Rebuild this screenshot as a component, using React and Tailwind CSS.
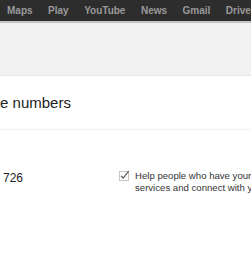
import React from "react";

const navItems = ["Maps", "Play", "YouTube", "News", "Gmail", "Drive"];

function CheckBox() {
  return (
    <svg width="11" height="11" viewBox="0 0 11 11" className="shrink-0">
      <rect x="0.5" y="1.5" width="9" height="9" fill="#fff" stroke="#c6c6c6" />
      <path d="M2 5.8 L4.2 8 L9.8 1" fill="none" stroke="#555" strokeWidth="1.2" />
    </svg>
  );
}

export default function App() {
  return (
    <div className="w-[251px] h-[255px] overflow-hidden bg-white font-['Liberation_Sans',Arial,sans-serif]">
      <div className="h-[21px] bg-[#2d2d2d] flex items-center gap-[15.5px] pl-[7px] whitespace-nowrap">
        {navItems.map((item) => (
          <span key={item} className="text-[10px] font-bold text-[#999] leading-none">
            {item}
          </span>
        ))}
      </div>
      <div className="h-[2px] bg-[#c4c4c4]" />
      <div className="h-[53px] bg-[#f1f1f1] border-b border-[#e5e5e5]" />
      <div className="h-[54px] border-b border-[#f2f2f2] flex items-center whitespace-nowrap">
        <h2 className="ml-[-35px] text-[15px] text-[#222] leading-none">Phone numbers</h2>
      </div>
      <div className="flex pt-[40px] whitespace-nowrap">
        <div className="w-[119px] shrink-0 pl-[3px] text-[12px] text-[#222] leading-none pt-[2px]">726</div>
        <div className="flex gap-[5px] text-[9.6px] text-[#333] leading-[12px]">
          <CheckBox />
          <div>
            Help people who have your
            <br />
            services and connect with you
          </div>
        </div>
      </div>
    </div>
  );
}
